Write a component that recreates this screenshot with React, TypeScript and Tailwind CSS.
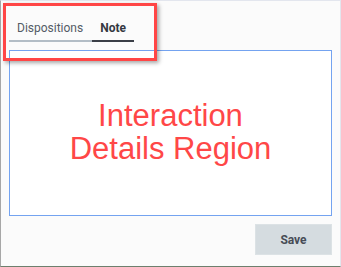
import React from "react";

const App: React.FC = () => {
  return (
    <div className="relative w-[341px] h-[267px] bg-[#fbfbfb] border-l border-l-[#a7a7a7] border-t border-t-[#e3e6ee] border-r border-r-[#e3e6ee] border-b border-b-[#6d7f6d] pl-2 pt-[18px] font-['Roboto',sans-serif]">
      {/* Tabs */}
      <div className="flex">
        <div className="pl-2 pr-[9px] pt-px pb-[4px] text-[12px] leading-4 text-[#545b66] border-b-2 border-b-[#b3bdc6]">
          Dispositions
        </div>
        <div className="px-2 pt-px pb-[4px] text-[12px] leading-4 font-bold text-[#343841] border-b-2 border-b-[#3b3f47]">
          Note
        </div>
      </div>

      {/* Details region */}
      <div className="mt-[8px] w-[323px] h-[166px] bg-white border border-[#74a3f0] flex items-center justify-center">
        <p className="-mt-[2px] text-center text-[31px] leading-[33px] text-[#ff4747] font-['Liberation_Sans',Arial,sans-serif]">
          Interaction
          <br />
          Details Region
        </p>
      </div>

      <div className="w-[323px] flex justify-end mt-2">
        <button className="w-[77px] h-[31px] bg-[#d5dce0] border border-[#dce2e5] text-[12px] font-bold text-[#474c56]">
          Save
        </button>
      </div>

      {/* Annotation */}
      <div className="absolute left-[2px] top-[2px] w-[154px] h-[58px] border-[3px] border-[#ff4646] shadow-[2px_2px_4px_rgba(0,0,0,0.35)]" />
    </div>
  );
};

export default App;
